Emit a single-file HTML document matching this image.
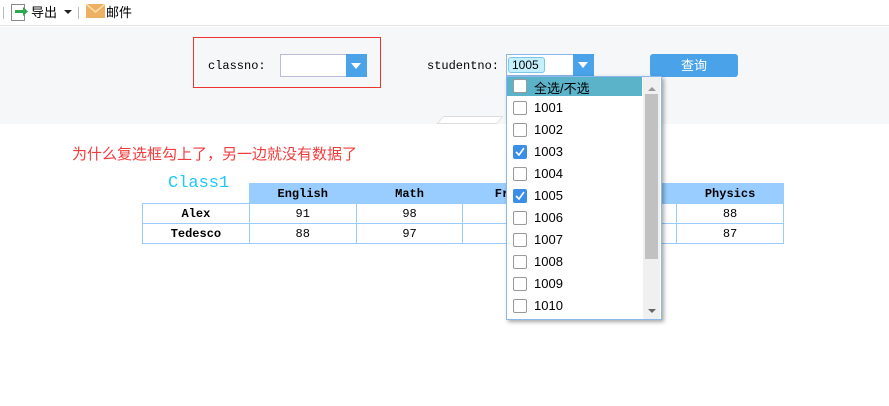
<!DOCTYPE html>
<html><head><meta charset="utf-8"><style>
*{margin:0;padding:0;box-sizing:border-box}
body{width:889px;height:406px;background:#fff;position:relative;overflow:hidden;font-family:"Liberation Sans","Noto Sans CJK SC",sans-serif;font-size:13px}
.a{position:absolute}
.mono{font-family:"Liberation Mono","Noto Sans CJK SC",monospace}
table{border-collapse:collapse;position:absolute;left:142px;top:183px;font-family:"Liberation Mono",monospace;font-size:12px;table-layout:fixed;width:642px}
td{border:1px solid #99ccff;height:20px;text-align:center;color:#000}
.row{position:absolute;left:507px;width:135px;height:22px;font-size:13px}
.cb{position:absolute;left:6px;top:5px;width:14px;height:14px;border:1px solid #999;border-radius:2px;background:#fff}
.cb.on{background:#3b8ee8;border-color:#3b8ee8}
.row span{position:absolute;left:27px;top:4px}
</style></head><body>
<div class="a" style="left:0;top:0;width:889px;height:26px;border-bottom:1px solid #e3e3e3"></div>
<div class="a" style="left:3px;top:7px;width:1px;height:12px;background:#bbb"></div>
<svg class="a" style="left:10px;top:2px" width="20" height="20"><rect x="1.5" y="2.5" width="13" height="16" fill="#fff" stroke="#888"/><path d="M5 8h8V5l5 4.5-5 4.5v-3H5z" fill="#2fa84f"/></svg>
<div class="a" style="left:31px;top:2px;font-size:13px">导出</div>
<div class="a" style="left:64px;top:10px;border:4px solid transparent;border-top:4px solid #222;width:0;height:0"></div>
<div class="a" style="left:78px;top:7px;width:1px;height:12px;background:#bbb"></div>
<svg class="a" style="left:86px;top:4px" width="19" height="14"><rect width="19" height="14" fill="#eeb062"/><path d="M0 0l9.5 8L19 0" fill="none" stroke="#fbe0b0" stroke-width="1.5"/></svg>
<div class="a" style="left:106px;top:2px;font-size:13px">邮件</div>
<div class="a" style="left:0;top:27px;width:889px;height:97px;background:#f6f7f9"></div>
<div class="a" style="left:440px;top:116px;width:60px;height:8px;background:#fff;border:1px solid #ddd;transform:skewX(-40deg)"></div>
<div class="a" style="left:193px;top:37px;width:188px;height:51px;border:1px solid #e33"></div>
<div class="a mono" style="left:208px;top:59px;font-size:12px">classno:</div>
<div class="a" style="left:280px;top:54px;width:67px;height:23px;border:1px solid #b8bcd6;background:#fff"></div>
<div class="a" style="left:346px;top:54px;width:21px;height:23px;background:#4aa3e8"></div>
<div class="a" style="left:351px;top:63px;border:5px solid transparent;border-top:6px solid #fff;width:0;height:0"></div>
<div class="a mono" style="left:427px;top:59px;font-size:12px">studentno:</div>
<div class="a" style="left:506px;top:54px;width:68px;height:22px;border:1px solid #8ab8ea;background:#fff"></div>
<div class="a" style="left:508px;top:57px;width:37px;height:16px;background:#c4f0fc;border:1px solid #7cc6e8;border-radius:3px;font-size:12px;padding-left:3px;line-height:14px">1005</div>
<div class="a" style="left:573px;top:54px;width:21px;height:22px;background:#4aa3e8"></div>
<div class="a" style="left:578px;top:62px;border:5px solid transparent;border-top:6px solid #fff;width:0;height:0"></div>
<div class="a" style="left:650px;top:54px;width:88px;height:23px;background:#4aa3e8;border-radius:3px;color:#fff;text-align:center;line-height:23px">查询</div>
<div class="a" style="left:72px;top:143px;color:#f23c3c;font-size:15px">为什么复选框勾上了，另一边就没有数据了</div>
<div class="a mono" style="left:168px;top:174px;color:#1ec8ff;font-size:17px">Class1</div>
<table>
<tr><td style="border:none;background:none"></td><td style="background:#99ccff;font-weight:bold">English</td><td style="background:#99ccff;font-weight:bold">Math</td><td style="background:#99ccff;font-weight:bold">French</td><td style="background:#99ccff"></td><td style="background:#99ccff;font-weight:bold">Physics</td></tr>
<tr><td style="font-weight:bold">Alex</td><td>91</td><td>98</td><td></td><td></td><td>88</td></tr>
<tr><td style="font-weight:bold">Tedesco</td><td>88</td><td>97</td><td></td><td></td><td>87</td></tr>
</table>
<div class="a" style="left:506px;top:76px;width:156px;height:244px;border:1px solid #8ab8ea;background:#fff;box-shadow:2px 2px 4px rgba(0,0,0,.35)"></div>
<div class="a" style="left:643px;top:77px;width:17px;height:242px;background:#f0f0f0"></div>
<div class="a" style="left:645px;top:94px;width:13px;height:165px;background:#c1c1c1"></div>
<div class="a" style="left:648px;top:83px;border:4px solid transparent;border-bottom:4px solid #999;width:0;height:0"></div>
<div class="a" style="left:648px;top:309px;border:4px solid transparent;border-top:4px solid #666;width:0;height:0"></div>
<div class="row" style="top:77px;height:19px;background:#5bb3c9"><div class="cb" style="top:2px"></div><span style="top:1px">全选/不选</span></div>
<div class="row" style="top:96px"><div class="cb"></div><span>1001</span></div>
<div class="row" style="top:118px"><div class="cb"></div><span>1002</span></div>
<div class="row" style="top:140px"><div class="cb on"><svg width="12" height="12" style="position:absolute;left:0;top:0"><path d="M2 6l3 3 5-7" fill="none" stroke="#fff" stroke-width="1.6"/></svg></div><span>1003</span></div>
<div class="row" style="top:162px"><div class="cb"></div><span>1004</span></div>
<div class="row" style="top:184px"><div class="cb on"><svg width="12" height="12" style="position:absolute;left:0;top:0"><path d="M2 6l3 3 5-7" fill="none" stroke="#fff" stroke-width="1.6"/></svg></div><span>1005</span></div>
<div class="row" style="top:206px"><div class="cb"></div><span>1006</span></div>
<div class="row" style="top:228px"><div class="cb"></div><span>1007</span></div>
<div class="row" style="top:250px"><div class="cb"></div><span>1008</span></div>
<div class="row" style="top:272px"><div class="cb"></div><span>1009</span></div>
<div class="row" style="top:294px"><div class="cb"></div><span>1010</span></div>
</body></html>
